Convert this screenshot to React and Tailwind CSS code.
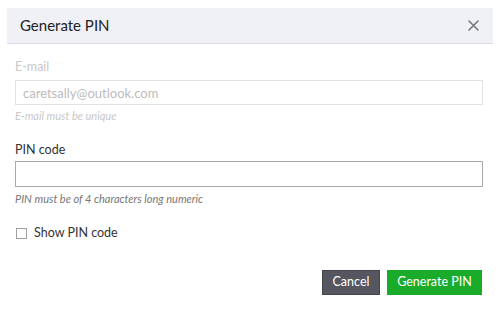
import React, { useState } from 'react';

function App() {
  const [pin, setPin] = useState('');
  const [showPin, setShowPin] = useState(false);

  return (
    <div className="w-[500px] h-[310px] overflow-hidden bg-white pt-2 px-[7px] font-['Lato','Noto_Sans',sans-serif]">
      {/* Шапка */}
      <div className="h-[36px] bg-[#f0f1f7] border-b border-[#dcdde3] flex items-center justify-between pl-[13px] pr-[10px]">
        <span className="text-[15px] text-[#222]">Generate PIN</span>
        <button className="text-[#777] w-5 h-5 flex items-center justify-center">
          <svg width="11" height="11" viewBox="0 0 11 11" fill="none" stroke="currentColor" strokeWidth="1.6" strokeLinecap="round">
            <path d="M1 1l9 9M10 1l-9 9" />
          </svg>
        </button>
      </div>

      {/* Форма */}
      <div className="px-2 pt-[15px]">
        <label className="block text-[12.5px] leading-4 text-[#c8c8c8]">E-mail</label>
        <input
          disabled
          placeholder="caretsally@outlook.com"
          className="mt-[5px] w-[468px] h-[25px] border border-[#e2e2e2] pl-[7px] pr-[7px] text-[13px] placeholder:text-[#bcbcbc] bg-white outline-none"
        />
        <p className="mt-[5px] text-[11px] leading-3 italic text-[#c8c8c8]">E-mail must be unique</p>

        <label className="block mt-[20px] text-[12.5px] leading-4 text-[#333]">PIN code</label>
        <input
          type={showPin ? 'text' : 'password'}
          value={pin}
          onChange={(e) => setPin(e.target.value)}
          className="mt-[3px] w-[468px] h-[26px] border border-[#a9a9a9] px-[7px] text-[13px] outline-none"
        />
        <p className="mt-[6px] text-[11px] leading-3 italic text-[#777]">PIN must be of 4 characters long numeric</p>

        <label className="mt-[19px] h-[19px] flex items-center gap-[7px] text-[12.5px] text-[#333]">
          <input
            type="checkbox"
            checked={showPin}
            onChange={(e) => setShowPin(e.target.checked)}
            className="appearance-none w-[11px] h-[11px] border border-[#a0a0a0] bg-white ml-[1px]"
          />
          Show PIN code
        </label>

        <div className="mt-[27px] flex justify-end gap-[7px] pr-[3px]">
          <button className="h-[25px] w-[58px] bg-[#565660] text-white text-[12.5px] border border-[#44444c]">Cancel</button>
          <button className="h-[25px] w-[95px] bg-[#1aab2b] text-white text-[12.5px]">Generate PIN</button>
        </div>
      </div>
    </div>
  );
}

export default App;
